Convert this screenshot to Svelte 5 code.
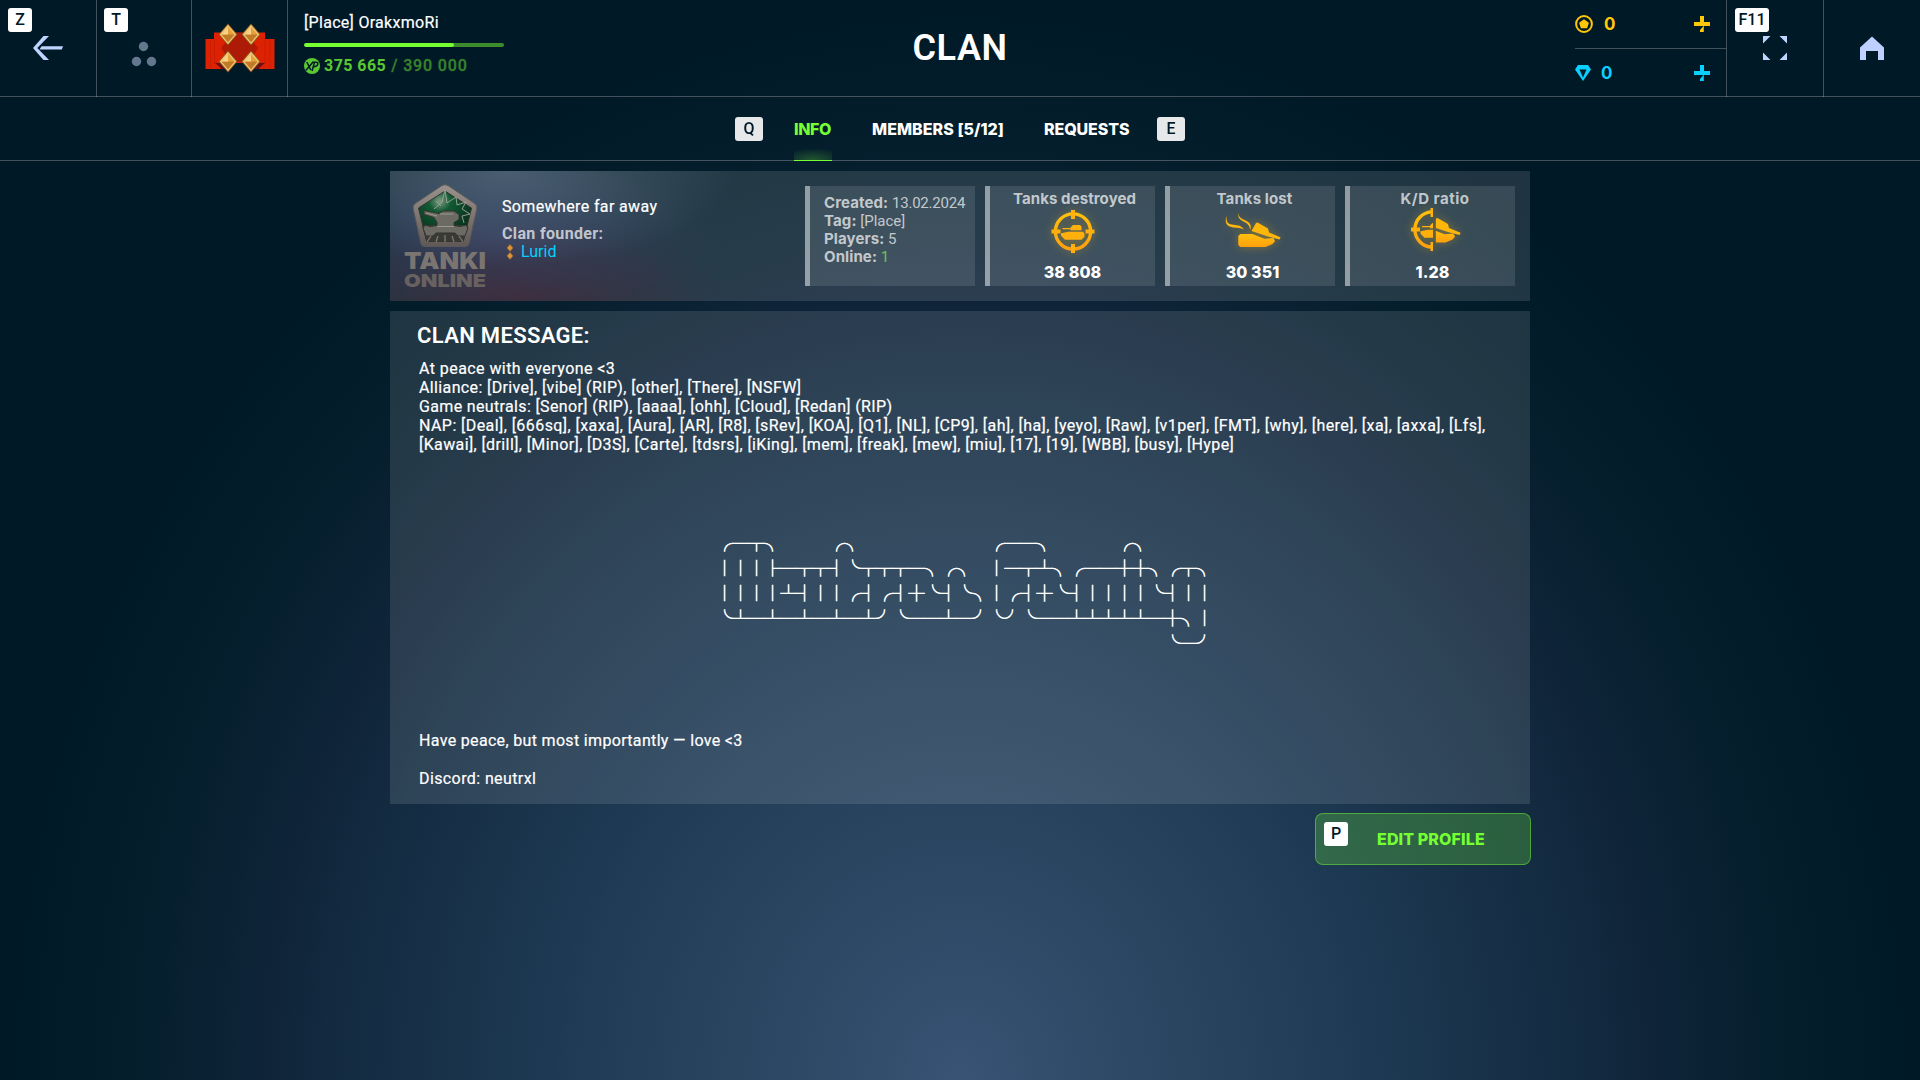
<script>
  const tabs = [
    { label: 'INFO', kind: 'info', active: true },
    { label: 'MEMBERS [5/12]', kind: 'members', active: false },
    { label: 'REQUESTS', kind: 'requests', active: false }
  ];

  const facts = [
    { name: 'Created:', value: '13.02.2024', kind: 'date' },
    { name: 'Tag:', value: '[Place]', kind: 'tag' },
    { name: 'Players:', value: '5', kind: 'num' },
    { name: 'Online:', value: '1', kind: 'on' }
  ];

  const intro = [
    { text: 'At peace with everyone <3', fit: 'c' },
    { text: 'Alliance: [Drive], [vibe] (RIP), [other], [There], [NSFW]', fit: 'b' },
    { text: 'Game neutrals: [Senor] (RIP), [aaaa], [ohh], [Cloud], [Redan] (RIP)', fit: 'a' },
    { text: 'NAP: [Deal], [666sq], [xaxa], [Aura], [AR], [R8], [sRev], [KOA], [Q1], [NL], [CP9], [ah], [ha], [yeyo], [Raw], [v1per], [FMT], [why], [here], [xa], [axxa], [Lfs],', fit: 'c' },
    { text: '[Kawai], [drill], [Minor], [D3S], [Carte], [tdsrs], [iKing], [mem], [freak], [mew], [miu], [17], [19], [WBB], [busy], [Hype]', fit: 'd' }
  ];

  // Full-width cells: every glyph and every space is one em wide.
  const art = [
    '╭─┬╮   ╭╮        ╭──╮    ╭╮',
    '│││├─┬┬┤╰┬┬┬─╮╭╮ │─┬┴╮╭──┼┼╮╭┬╮',
    '││││┴┤││╭┤╭┤┼╰┤╰╮│╭┤┼╰┤││││╰┤││',
    '╰┴─┴─┴─┴─┴╯╰──┴─╯╰╯╰──┴┴┴┴┴─┼╮│',
    '                            ╰─╯'
  ].map((row) => row.replaceAll(' ', '\u3000')).join('\n');

  const stars = [[23, 13.5], [46, 13.5], [23, 40.5], [46, 40.5]];
</script>

{#snippet crosshair()}
  <circle cx="24" cy="24" r="17.6" fill="none" stroke="url(#amber)" stroke-width="3.4" />
  <path fill="#ffb00c" d="M22 2.500h4v9h-4zM22 36.500h4v9h-4zM2.500 22h9v4h-9zM36.500 22h9v4h-9z" />
  <path fill="#ffb00c" d="M13.500 20.600h8.500v1.200h-8.500zM24 17.500h7l1.500 1.500v3.800H21.500v-2.800zM19.500 24.200h14.500l1.500 2v3l-3 3H16l-4-4v-2.500z" />
{/snippet}

{#snippet wreck()}
  <path fill="url(#amber)" d="M19.800 28H32l12 4.800 9-.8 1.500 3.200-2.500 2.800-7 3H19.800l-2-2v-9z" />
  <path fill="#ffb60b" d="M35.500 17l1.500-.6L47.500 22.500l1 4L60 31.300l-.9 2.300-11.600-3.200-16.500-5.300z" />
{/snippet}

{#snippet gem(x, y, w, h)}
  <path fill="#8f5a1d" d="M{x} {y - h}L{x + w} {y}L{x} {y + h}L{x - w} {y}Z" />
  <path fill="#f0c877" d="M{x} {y - h + 1.2}L{x + w - 1.2} {y}L{x} {y + h - 1.2}L{x - w + 1.2} {y}Z" />
  <path fill="#e5a23a" d="M{x} {y - h + 3.2}L{x + w - 3} {y}L{x} {y + h - 3.2}L{x - w + 3} {y}Z" />
  <path fill="#c07a28" d="M{x} {y}L{x + w - 3} {y}L{x} {y + h - 3.2}L{x - w + 3} {y}Z" />
  <path fill="#f8d188" d="M{x} {y - h + 3.2}V{y}L{x - w + 3} {y}Z" />
{/snippet}

<div class="page">
  <header>
    <div class="side">
      <div class="cell back">
        <kbd class="corner">Z</kbd>
        <svg width="96" height="96" viewBox="0 0 96 96">
          <path fill="#bfd5ff" d="M43.500 36h5.500L37.300 48 49 60h-5.500L33 48z" />
          <path fill="#bfd5ff" d="M41.500 46.200H63l-1.200 3.400H39.500z" />
        </svg>
      </div>
      <div class="cell friends">
        <kbd class="corner">T</kbd>
        <svg width="94" height="96" viewBox="0 0 94 96">
          <g fill="#63778f">
            <circle cx="46.5" cy="46.5" r="4.7" />
            <circle cx="39.5" cy="61.5" r="4.7" />
            <circle cx="54.5" cy="61.500" r="4.700" />
          </g>
        </svg>
      </div>
      <div class="cell rank">
        <svg width="70" height="54" viewBox="0 0 70 54">
          <path fill="#dd2204" d="M.500 18H9v-6.500h51V18h9.500v30H54.500L46 42H24l-8.500 6H.5z" />
          <path fill="#c91c03" d="M9 18h1v25H9zM59.500 18h1v25h-1zM5 19h.8v28H5zM64.500 19h.8v28h-.8z" />
          <path fill="#ad1a06" d="M28 12h13l12 15-9 14H25L16 27z" />
          <path fill="#6b1115" d="M10 42h6l8 6h-7zM60 42h-6l-8 6h7z" />
          {#each stars as [x, y]}
            {@render gem(x, y, 9.5, 11)}
          {/each}
        </svg>
      </div>
      <div class="player">
        <div class="nick">[Place] OrakxmoRi</div>
        <div class="bar"><i></i></div>
        <div class="xp">
          <svg width="16" height="16" viewBox="0 0 16 16">
            <circle cx="8" cy="8" r="8" fill="#5bc832" />
            <path fill="none" stroke="#021927" stroke-width="1.500" d="M2.800 4l4 8M9.500 3.500L1.800 12.500M8 13l2.500-8.800h1.700q2 0 1.500 2.200t-4 2.300" />
          </svg>
          <b>375 665</b><span>/ 390 000</span>
        </div>
      </div>
    </div>

    <h1>CLAN</h1>

    <div class="side right">
      <div class="wallet">
        <div class="coin gold">
          <svg width="18" height="18" viewBox="0 0 18 18">
            <circle cx="9" cy="9" r="7.900" fill="none" stroke="#ffc70a" stroke-width="2" />
            <path fill="#ffc70a" d="M9 4.200l4.900 3.500-1.800 5.600H5.900L4.100 7.700z" />
          </svg>
          <b>0</b>
          <svg class="plus" width="16" height="16" viewBox="0 0 16 16"><path fill="#ffc70a" d="M6 0h4v6h6v4h-6l-.2 1V16H6v-2l3.500-4H0V6h6z" /></svg>
        </div>
        <div class="coin ruby">
          <svg width="16" height="16" viewBox="0 0 16 16">
            <path fill="#0ad0ff" fill-rule="evenodd" d="M3 0h10l3 4.500L8 16 0 4.500zM4.500 4.500L8 12.500l3.500-8z" />
          </svg>
          <b>0</b>
          <svg class="plus" width="16" height="16" viewBox="0 0 16 16"><path fill="#0ad0ff" d="M6 0h4v6h6v4h-6l-.2 1V16H6v-2l3.500-4H0V6h6z" /></svg>
        </div>
      </div>
      <div class="cell full">
        <kbd class="corner wide">F11</kbd>
        <svg width="24" height="24" viewBox="0 0 24 24"><path fill="#bfd5ff" d="M0 0h7.500L0 7.500zM24 0v7.500L16.500 0zM0 24v-7.500L7.500 24zM24 24h-7.500l7.500-7.500z" /></svg>
      </div>
      <div class="home">
        <svg width="24" height="24" viewBox="0 0 24 24"><path fill="#bfd0ff" d="M12 .5L24 11.500V24h-6v-9H6v9H0V11.500z" /></svg>
      </div>
    </div>
  </header>

  <nav>
    <kbd class="nav-key">Q</kbd>
    {#each tabs as tab}
      <div class="tab {tab.kind}" class:active={tab.active}>{tab.label}</div>
    {/each}
    <kbd class="nav-key">E</kbd>
  </nav>

  <main>
    <section class="clan">
      <svg class="emblem" width="90" height="112" viewBox="0 0 90 112">
        <defs>
          <linearGradient id="stone" x1="0" y1="0" x2="0" y2="1"><stop offset="0" stop-color="#98918c" /><stop offset=".5" stop-color="#7d7673" /><stop offset="1" stop-color="#5f5856" /></linearGradient>
          <linearGradient id="amber" x1="0" y1="0" x2="0" y2="1"><stop offset="0" stop-color="#ffc00a" /><stop offset="1" stop-color="#ffa00e" /></linearGradient>
          <radialGradient id="field" cx=".4" cy=".2" r=".7"><stop offset="0" stop-color="#7d9b80" /><stop offset=".3" stop-color="#125a34" /><stop offset="1" stop-color="#07301b" /></radialGradient>
        </defs>
        <path fill="url(#stone)" stroke="#5c5855" stroke-linejoin="round" d="M42 5.500q3-1.500 6 0L75.500 24q2 2 1.300 5L69 63.500q-.8 3-3.500 3h-41q-2.700 0-3.500-3L13.200 29q-.7-3 1.300-5z" />
        <path fill="url(#field)" stroke="#35332f" d="M45 11l26.500 17-8.200 33.500H26.700L18.500 28z" />
        <path fill="#3a3a34" d="M22 45h46l-4.500 16.500h-37z" />
        <path fill="none" stroke="#9fa69b" stroke-width=".9" d="M34 29l8-7 3-12 2 13 9-6 1 8 9-3-4 7 8 5-8 2 2 7M36 21l5 5" />
        <path fill="#6b6b64" stroke="#34342f" d="M24 30.500l15 3 4-2.500h11l5 3.500v5l-5 3v3l6 1 6-1.500 2 3-3 8h-7l-3-3H36l-3 3h-7l-3-8 2-3 5 1.500 7-1v-3l-3-5-10-3z" />
        <path fill="none" stroke="#a5a59c" stroke-width=".8" d="M40 34h13M37 46.500h17M26 33l11 3" />
        <path stroke="#7c7871" stroke-width="1.300" d="M31 56l-4 6M38 56l-2 6M45 55v7M52 56l2 6M59 56l4 6" />
        <text class="wordmark" fill="#7b7572">
          <tspan x="4" y="88.500" font-size="23.500" textLength="82" lengthAdjust="spacingAndGlyphs">TANKI</tspan>
          <tspan x="4" y="106.500" font-size="18" textLength="82" lengthAdjust="spacingAndGlyphs" fill="#676160">ONLINE</tspan>
        </text>
      </svg>

      <div class="about">
        <div class="motto">Somewhere far away</div>
        <div class="founder-label">Clan founder:</div>
        <div class="founder">
          <svg width="8" height="16" viewBox="0 0 8 16">
            <path fill="#d9943c" stroke="#7b5426" stroke-width=".6" d="M4 .3L7.200 3.900 4 7.500.8 3.900zM4 8.300l3.200 3.600L4 15.500.8 11.900z" />
          </svg>
          <span>Lurid</span>
        </div>
      </div>

      <div class="stats">
        <div class="stat facts">
          {#each facts as fact}
            <div><b>{fact.name}</b> <span class={fact.kind}>{fact.value}</span></div>
          {/each}
        </div>
        <div class="stat">
          <h3>Tanks destroyed</h3>
          <svg width="48" height="48" viewBox="0 .5 48 48">{@render crosshair()}</svg>
          <strong>38 808</strong>
        </div>
        <div class="stat">
          <h3>Tanks lost</h3>
          <svg width="60" height="48" viewBox="2.500 2 60 48">
            {@render wreck()}
            <path fill="#ffb80a" d="M6 9.500C5.500 17 8 18.300 13 18.800c5 .4 8 1 10.500 4.700-4-1.500-6-1.700-10-2C7 21 3.500 18 6 9.500zM18 6.700c0 4.300 2 5.100 5 6.800 6 2.700 8.500 4.500 6.700 10.500-.7-5-2.700-6.500-6.700-8.500-4-2-6-3.500-5-8.800z" />
          </svg>
          <strong>30 351</strong>
        </div>
        <div class="stat">
          <h3 class="ratio">K/D ratio</h3>
          <svg width="60" height="48" viewBox="-5.500 2.500 60 48">
            <clipPath id="left"><path d="M0 0h24.500v48H0z" /></clipPath>
            <clipPath id="rightHalf"><path d="M35.200 0h30v50h-30z" /></clipPath>
            <g clip-path="url(#left)">{@render crosshair()}</g>
            <g transform="translate(-8 -4)" clip-path="url(#rightHalf)">{@render wreck()}</g>
          </svg>
          <strong>1.28</strong>
        </div>
      </div>
    </section>

    <section class="message">
      <h2>CLAN MESSAGE:</h2>
      <div class="body">
        {#each intro as line}
          <div class="line {line.fit}">{line.text}</div>
        {/each}
        <pre>{art}</pre>
        <div class="line e">Have peace, but most importantly — love &lt;3</div>
        <div class="line last">Discord: neutrxl</div>
      </div>
    </section>

    <button><kbd>P</kbd><span>EDIT PROFILE</span></button>
  </main>
</div>

<style>
  :global(body) { background: #001926; overflow: hidden; }
  .page {
    height: 1080px;
    display: flex;
    flex-direction: column;
    color: #fff;
    font: 16px/20px Roboto, sans-serif;
    background: radial-gradient(50% 100% at 50% 100%, #385374 0%, #2c4763 20%, #1f3b55 40%, #142c42 63%, #0f2439 72%, #061f2e 84%, #001926 100%);
  }
  .page * { box-sizing: border-box; }
  svg { display: block; }
  h1, h2, h3, pre { margin: 0; }

  kbd {
    display: flex;
    align-items: center;
    justify-content: center;
    width: 24px;
    height: 24px;
    border-radius: 3px;
    background: #fff;
    color: #001926;
    font: 500 16px/24px Roboto, sans-serif;
  }
  .corner { position: absolute; left: 8px; top: 8px; }
  .friends .corner { left: 7px; }
  .corner.wide { width: 34px; }

  header {
    height: 97px;
    display: grid;
    grid-template-columns: 1fr auto 1fr;
    border-bottom: 1px solid rgba(255, 255, 255, .25);
  }
  .side { display: flex; }
  .right { justify-content: flex-end; }
  .cell { position: relative; border-right: 1px solid rgba(255, 255, 255, .25); }
  .back { width: 97px; }
  .friends { width: 95px; }
  .rank { width: 96px; padding: 21px 0 0 13px; }
  .player { padding: 13px 0 0 16px; }
  .nick { letter-spacing: .3px; margin-bottom: 10px; -webkit-text-stroke: .2px #fff; }
  .bar { width: 200px; height: 4px; border-radius: 2px; background: #3c8b2d; overflow: hidden; }
  .bar i { display: block; width: 75%; height: 100%; border-radius: 2px; background: #76ff33; }
  .xp { display: flex; align-items: center; margin-top: 9px; font-weight: 500; color: #38832c; }
  .xp b { font-weight: 700; color: #5bc832; margin: 0 5px 0 4px; letter-spacing: .45px; }
  .xp span { letter-spacing: .85px; -webkit-text-stroke: .3px #38832c; }

  h1 { font: 600 36px/96px Roboto, sans-serif; letter-spacing: .6px; }

  .wallet { width: 152px; border-right: 1px solid rgba(255, 255, 255, .25); }
  .coin { display: flex; align-items: center; height: 48px; padding-right: 16px; font-size: 18px; }
  .coin b { font-family: Inter, sans-serif; font-weight: 700; margin-left: 11px; font-size: 17px; }
  .plus { margin-left: auto; }
  .gold { color: #ffc70a; height: 49px; border-bottom: 1px solid rgba(255, 255, 255, .25); }
  .ruby { color: #0ad0ff; }
  .ruby b { margin-left: 10px; }
  .full { width: 97px; padding: 36px 0 0 36px; }
  .home { width: 96px; padding: 36px; }

  nav {
    height: 64px;
    display: flex;
    align-items: center;
    justify-content: center;
    border-bottom: 1px solid rgba(255, 255, 255, .25);
  }
  .nav-key { width: 28px; opacity: .9; margin-top: 1px; }
  .tab { height: 64px; font: 800 16px/64px Inter, sans-serif; white-space: nowrap; }
  .info { width: 38px; margin: 0 40px 0 31px; letter-spacing: -.4px; }
  .members { width: 132px; margin-right: 40px; letter-spacing: .05px; }
  .requests { width: 85px; margin-right: 28px; letter-spacing: -.1px; }
  .active {
    color: #76ff33;
    border-bottom: 1px solid #76ff33;
    background: radial-gradient(90% 12px at 50% 100%, rgba(118, 255, 51, .25), transparent);
  }

  main { width: 1140px; margin: 10px auto 0; display: flex; flex-direction: column; }

  .clan {
    height: 130px;
    display: flex;
    align-items: flex-start;
    background:
      radial-gradient(230px 95px at 115px 0, rgba(130, 148, 175, .42), transparent),
      radial-gradient(220px 75px at 110px 65px, rgba(75, 80, 140, .32), transparent),
      radial-gradient(210px 85px at 125px 125px, rgba(95, 28, 45, .42), transparent),
      rgba(255, 255, 255, .12);
  }
  .emblem { margin: 9px 0 0 10px; }
  .wordmark { font-family: Inter, sans-serif; font-weight: 900; }
  .about { padding: 26px 0 0 12px; width: 315px; }
  .motto { letter-spacing: .37px; -webkit-text-stroke: .2px #fff; }
  .founder-label { font-weight: 700; letter-spacing: .34px; color: rgba(255, 255, 255, .7); margin-top: 7px; }
  .founder { display: flex; align-items: center; gap: 7px; padding-left: 4px; margin-top: -2px; color: #00d2ff; }

  .stats { display: flex; gap: 10px; padding-top: 15px; }
  .stat {
    width: 170px;
    height: 100px;
    padding-top: 4px;
    display: flex;
    flex-direction: column;
    align-items: center;
    border-left: 5px solid rgba(255, 255, 255, .45);
    background: rgba(255, 255, 255, .11);
  }
  .stat svg { filter: drop-shadow(0 0 5px rgba(255, 190, 10, .35)); }
  .stat h3 {
    font: 700 15px/18px Inter, sans-serif;
    color: rgba(255, 255, 255, .7);
    padding-left: 4px;
    letter-spacing: .1px;
  }
  .stat .ratio { letter-spacing: .5px; padding-left: 5px; }
  .stat strong { margin-top: 6px; font: 800 16px/20px Inter, sans-serif; letter-spacing: .1px; }
  .facts {
    align-items: flex-start;
    padding: 8px 0 0 14px;
    font-size: 15px;
    line-height: 18px;
    color: rgba(255, 255, 255, .7);
    white-space: nowrap;
  }
  .facts b { font-family: Inter, sans-serif; letter-spacing: .1px; }
  .date { letter-spacing: -.2px; }
  .on { color: #6cc65a; }

  .message { height: 493px; margin-top: 10px; padding: 12px 20px 0 29px; background: rgba(255, 255, 255, .115); }
  h2 { font: 600 22px/26px Roboto, sans-serif; letter-spacing: .33px; margin: 0 0 10px -2px; }
  .line { line-height: 19px; white-space: pre; -webkit-text-stroke: .2px #fff; }
  .a { letter-spacing: .35px; }
  .b { letter-spacing: .37px; }
  .c { letter-spacing: .43px; }
  .d { letter-spacing: .39px; }
  .e { letter-spacing: .33px; }
  .last { letter-spacing: .4px; margin-top: 19px; }
  pre {
    margin: 76px 0 76px 297.5px;
    font: 16px/25px "Noto Sans CJK JP", sans-serif;
    -webkit-text-stroke: .6px #fff;
  }

  button {
    align-self: flex-end;
    width: 216px;
    height: 52px;
    margin: 9px -1px 0 0;
    padding: 8px;
    display: flex;
    align-items: flex-start;
    border: 1px solid rgba(118, 255, 51, .45);
    border-radius: 8px;
    background: rgba(118, 255, 51, .24);
    color: #76ff33;
  }
  button span { font: 800 16px/34px Inter, sans-serif; letter-spacing: .12px; margin-left: 29px; }
</style>
